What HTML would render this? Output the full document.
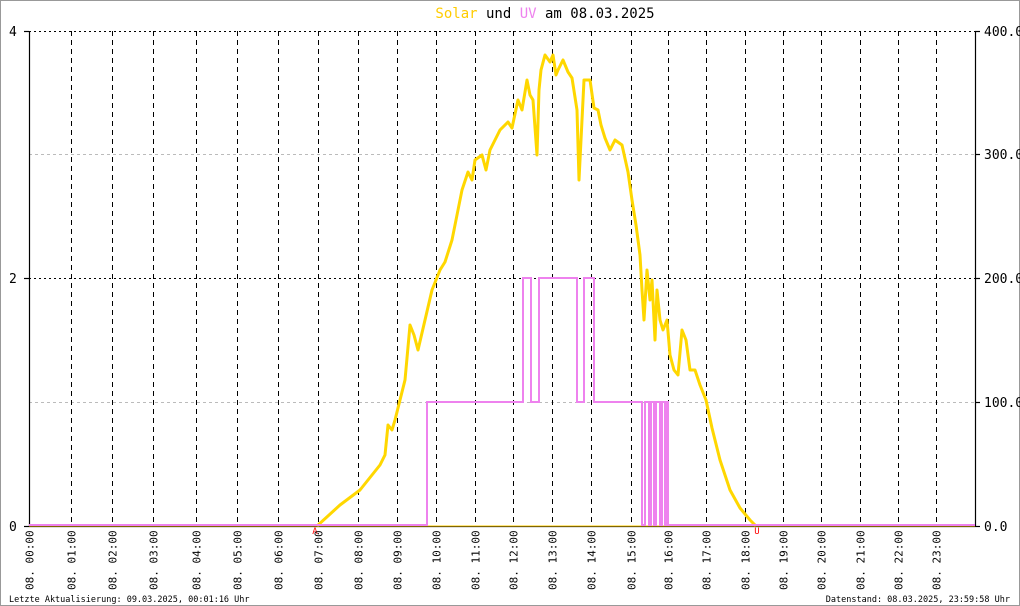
<!DOCTYPE html>
<html><head><meta charset="utf-8"><style>
html,body{margin:0;padding:0;background:#fff}
svg{display:block}
text{font-family:"DejaVu Sans Mono","Liberation Mono",monospace}
</style></head><body>
<svg width="1020" height="606" viewBox="0 0 1020 606" xmlns="http://www.w3.org/2000/svg">
<rect x="0.5" y="0.5" width="1019" height="605" fill="#fff" stroke="#999"/>
<text x="545" y="18" font-size="14" text-anchor="middle"><tspan fill="#ffcc00">Solar</tspan><tspan fill="#000"> und </tspan><tspan fill="#ee82ee">UV</tspan><tspan fill="#000"> am 08.03.2025</tspan></text>
<g stroke="#bbb" stroke-dasharray="3,3" stroke-width="1">
<line x1="29" y1="154.5" x2="975" y2="154.5"/><line x1="29" y1="402.5" x2="975" y2="402.5"/>
</g>
<g stroke="#000" stroke-dasharray="2,3" stroke-width="1">
<line x1="29" y1="31.5" x2="975" y2="31.5"/><line x1="29" y1="278.5" x2="975" y2="278.5"/>
</g>
<g stroke="#000" stroke-dasharray="5,4" stroke-width="1">
<line x1="71.5" y1="31" x2="71.5" y2="526"/><line x1="112.5" y1="31" x2="112.5" y2="526"/>
<line x1="153.5" y1="31" x2="153.5" y2="526"/><line x1="196.5" y1="31" x2="196.5" y2="526"/>
<line x1="237.5" y1="31" x2="237.5" y2="526"/><line x1="278.5" y1="31" x2="278.5" y2="526"/>
<line x1="318.5" y1="31" x2="318.5" y2="526"/><line x1="358.5" y1="31" x2="358.5" y2="526"/>
<line x1="397.5" y1="31" x2="397.5" y2="526"/><line x1="436.5" y1="31" x2="436.5" y2="526"/>
<line x1="475.5" y1="31" x2="475.5" y2="526"/><line x1="513.5" y1="31" x2="513.5" y2="526"/>
<line x1="552.5" y1="31" x2="552.5" y2="526"/><line x1="591.5" y1="31" x2="591.5" y2="526"/>
<line x1="631.5" y1="31" x2="631.5" y2="526"/><line x1="668.5" y1="31" x2="668.5" y2="526"/>
<line x1="706.5" y1="31" x2="706.5" y2="526"/><line x1="745.5" y1="31" x2="745.5" y2="526"/>
<line x1="783.5" y1="31" x2="783.5" y2="526"/><line x1="821.5" y1="31" x2="821.5" y2="526"/>
<line x1="860.5" y1="31" x2="860.5" y2="526"/><line x1="898.5" y1="31" x2="898.5" y2="526"/>
<line x1="936.5" y1="31" x2="936.5" y2="526"/>
</g>
<g stroke="#000" stroke-width="1.2">
<line x1="29.5" y1="31" x2="29.5" y2="526"/><line x1="975.5" y1="31" x2="975.5" y2="526"/>
<line x1="29" y1="526.5" x2="975" y2="526.5"/>
<line x1="24" y1="31.5" x2="29" y2="31.5"/><line x1="24" y1="278.5" x2="29" y2="278.5"/><line x1="24" y1="526.5" x2="29" y2="526.5"/>
<line x1="975" y1="31.5" x2="980" y2="31.5"/><line x1="975" y1="154.5" x2="980" y2="154.5"/><line x1="975" y1="278.5" x2="980" y2="278.5"/><line x1="975" y1="402.5" x2="980" y2="402.5"/><line x1="975" y1="526.5" x2="980" y2="526.5"/>
</g>
<g font-size="13" fill="#000">
<text x="9" y="36">4</text><text x="9" y="283">2</text><text x="9" y="531">0</text>
<text x="984" y="36">400.0</text><text x="984" y="159">300.0</text><text x="984" y="283">200.0</text><text x="984" y="407">100.0</text><text x="984" y="531">0.0</text>
</g>
<line x1="29" y1="526" x2="975" y2="526" stroke="#ffcc00" stroke-width="1"/>
<polyline fill="none" stroke="#ffd700" stroke-width="3" stroke-linejoin="round" points="317,526 340,505 360,490 380,465 385,455 388,425 392,430 395,420 400,400 405,380 410,325 414,335 418,350 425,320 432,290 440,270 445,262 452,240 458,210 462,190 468,172 472,180 475,160 482,155 486,170 490,150 500,130 508,122 512,128 518,100 522,110 527,80 530,95 533,100 537,155 539,90 541,70 545,55 550,62 553,55 556,75 558,70 563,60 568,72 572,78 577,110 579,180 582,120 584,80 590,80 594,108 598,110 601,125 605,138 610,150 615,140 622,145 628,172 632,200 636,225 640,255 642,290 644,320 647,270 650,300 652,280 655,340 657,290 660,320 663,330 667,320 670,355 674,370 678,375 682,330 686,340 690,370 695,370 700,385 706,400 712,428 720,460 730,490 740,508 750,520 756,526"/>
<polyline fill="none" stroke="#ee82ee" stroke-width="2" points="29,525 427,525 427,402 523,402 523,278 531,278 531,402 539,402 539,278 577,278 577,402 584,402 584,278 594,278 594,402 642,402 642,525 645,525 645,402 649,402 649,525 651,525 651,402 654,402 654,525 656,525 656,402 660,402 660,525 662,525 662,402 665,402 665,525 667,525 667,402 668,402 668,525 975,525"/>
<text x="315" y="534" font-size="9" fill="#f00" text-anchor="middle">A</text>
<text x="757" y="534" font-size="9" fill="#f00" text-anchor="middle">U</text>
<g font-size="11" fill="#000">
<text transform="translate(33.5,590) rotate(-90)">08. 00:00</text>
<text transform="translate(75.5,590) rotate(-90)">08. 01:00</text>
<text transform="translate(116.5,590) rotate(-90)">08. 02:00</text>
<text transform="translate(157.5,590) rotate(-90)">08. 03:00</text>
<text transform="translate(200.5,590) rotate(-90)">08. 04:00</text>
<text transform="translate(241.5,590) rotate(-90)">08. 05:00</text>
<text transform="translate(282.5,590) rotate(-90)">08. 06:00</text>
<text transform="translate(322.5,590) rotate(-90)">08. 07:00</text>
<text transform="translate(362.5,590) rotate(-90)">08. 08:00</text>
<text transform="translate(401.5,590) rotate(-90)">08. 09:00</text>
<text transform="translate(440.5,590) rotate(-90)">08. 10:00</text>
<text transform="translate(479.5,590) rotate(-90)">08. 11:00</text>
<text transform="translate(517.5,590) rotate(-90)">08. 12:00</text>
<text transform="translate(556.5,590) rotate(-90)">08. 13:00</text>
<text transform="translate(595.5,590) rotate(-90)">08. 14:00</text>
<text transform="translate(635.5,590) rotate(-90)">08. 15:00</text>
<text transform="translate(672.5,590) rotate(-90)">08. 16:00</text>
<text transform="translate(710.5,590) rotate(-90)">08. 17:00</text>
<text transform="translate(749.5,590) rotate(-90)">08. 18:00</text>
<text transform="translate(787.5,590) rotate(-90)">08. 19:00</text>
<text transform="translate(825.5,590) rotate(-90)">08. 20:00</text>
<text transform="translate(864.5,590) rotate(-90)">08. 21:00</text>
<text transform="translate(902.5,590) rotate(-90)">08. 22:00</text>
<text transform="translate(940.5,590) rotate(-90)">08. 23:00</text>
</g>
<text x="9" y="602" font-size="8.5" fill="#000">Letzte Aktualisierung: 09.03.2025, 00:01:16 Uhr</text>
<text x="1010" y="602" font-size="8.5" fill="#000" text-anchor="end">Datenstand: 08.03.2025, 23:59:58 Uhr</text>
</svg>
</body></html>
